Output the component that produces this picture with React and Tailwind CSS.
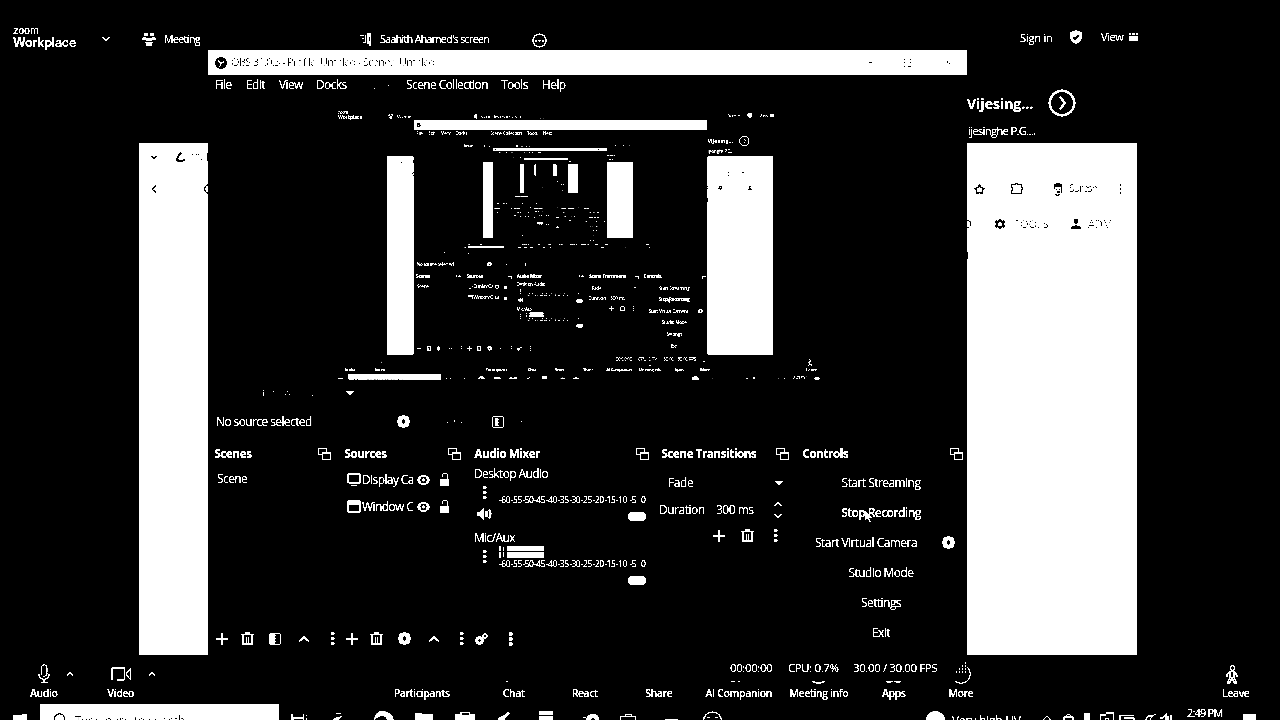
import React from "react";
import {
  ChevronLeft, Star, MessageSquare, Heart, Info, Sparkles, Share, LayoutGrid, Users,
} from "lucide-react";
import { MdPerson, MdSettings } from "react-icons/md";

/* ---------- small drawings ---------- */

const Gear = ({ s = 13 }) => (
  <svg width={s} height={s} viewBox="0 0 14 14" className="shrink-0" fill="none" stroke="currentColor">
    <circle cx="7" cy="7" r="4.100" strokeWidth="3.600" />
    <circle cx="7" cy="7" r="6" strokeWidth="2" pathLength="16" strokeDasharray="1.2 0.8" strokeDashoffset="0.6" />
  </svg>
);

const Plus = () => (
  <svg width="12" height="12" viewBox="0 0 12 12" className="shrink-0" shapeRendering="crispEdges">
    <path d="M5 0h2v12H5zM0 5h12v2H0z" fill="currentColor" />
  </svg>
);

const Trash = () => (
  <svg width="13" height="14" viewBox="0 0 13 14" className="shrink-0" fill="none" stroke="currentColor">
    <path d="M4 1h5" strokeWidth="2" />
    <path d="M0.5 2.5h12" strokeWidth="1.4" />
    <path d="M2 3v9.2h9V3" strokeWidth="2" />
    <path d="M5.5 5v6M7.5 5v6" strokeWidth="1" />
  </svg>
);

const Filter = () => (
  <svg width="12" height="12" viewBox="0 0 12 12" className="shrink-0">
    <rect x="0.5" y="0.5" width="11" height="11" rx="1.5" fill="none" stroke="currentColor" />
    <path d="M1 1h5v1h1v1H6v2h1v1H6v2h1v1H6v2H1z" fill="currentColor" />
  </svg>
);

const HalfBox = () => (
  <svg width="12" height="12" viewBox="0 0 12 12" className="shrink-0">
    <rect x="0.5" y="0.5" width="11" height="11" rx="1.5" fill="none" stroke="currentColor" />
    <path d="M3 2h3v1h1v1H6v2h1v1H6v2h1v1H3z" fill="currentColor" />
  </svg>
);

const Dots = ({ h = 13 }) => (
  <svg width="4" height={h} viewBox="0 0 4 13" className="shrink-0" fill="currentColor">
    <rect x="0" y="0" width="3.4" height="3" rx="0.6" />
    <rect x="0" y="5" width="3.4" height="3" rx="0.6" />
    <rect x="0" y="10" width="3.4" height="3" rx="0.6" />
  </svg>
);

const Up = ({ w = 12, sw = 1.8 }) => (
  <svg width={w} height={w / 2} viewBox="0 0 12 6" className="shrink-0" fill="none" stroke="currentColor" strokeWidth={sw}>
    <path d="M1 5.5 6 1l5 4.5" />
  </svg>
);

const Down = ({ w = 8, sw = 2 }) => (
  <svg width={w} height={w / 2} viewBox="0 0 12 6" className="shrink-0" fill="none" stroke="currentColor" strokeWidth={sw}>
    <path d="M1 0.5 6 5l5-4.5" />
  </svg>
);

const Caret = () => (
  <svg width="8" height="4" viewBox="0 0 8 4" className="shrink-0">
    <path d="M0 0h8L4 4z" fill="currentColor" />
  </svg>
);

const Popout = () => (
  <svg width="14" height="14" viewBox="0 0 14 14" className="shrink-0" fill="currentColor" shapeRendering="crispEdges">
    <path d="M0 1h9v4H8V2H1v5h3v1H0z" />
    <path d="M4 5h9v8H4zM5 7v5h7V7z" fillRule="evenodd" />
  </svg>
);

const Eye = () => (
  <svg width="13" height="10" viewBox="0 0 13 10" className="shrink-0">
    <path d="M0 5C3-1.6 10-1.6 13 5 10 11.6 3 11.6 0 5z" fill="currentColor" />
    <circle cx="6.5" cy="5" r="3.2" fill="#000" />
    <circle cx="6.5" cy="5" r="1.4" fill="currentColor" />
  </svg>
);

const Lock = () => (
  <svg width="10" height="13" viewBox="0 0 10 13" className="shrink-0">
    <path d="M2.5 4V2.5a2 2 0 0 1 5 0V6" fill="none" stroke="currentColor" strokeWidth="0.9" />
    <rect x="0" y="6" width="9" height="7" fill="currentColor" />
  </svg>
);

const Speaker = () => (
  <svg width="15" height="12" viewBox="0 0 15 12" className="shrink-0" fill="currentColor">
    <path d="M0 4h3l4-4v12L3 8H0z" />
    <path d="M9.5 3v6M12 1.5q3 4.500 0 9" fill="none" stroke="currentColor" strokeWidth="1.9" />
  </svg>
);

const Gears = () => (
  <span className="flex w-[15px] shrink-0 items-end">
    <Gear s={9} />
    <span className="-ml-0.5 mb-[6px]"><Gear s={6} /></span>
  </span>
);

const Cursor = () => (
  <svg width="9" height="14" viewBox="0 0 9 14" className="absolute left-[62px] top-[12px]">
    <path d="M1 0v11l2.500-2.200L5.500 13l1.700-.8-1.700-4H9z" fill="#fff" stroke="#000" strokeWidth="0.6" />
  </svg>
);

/* ---------- zoom meeting chrome ---------- */

const ZoomHeader = () => (
  <div className="flex h-[50px] items-start pl-[13px] text-[11px] leading-4 tracking-[-0.2px]">
    <div className="w-[89px] pt-[25px] font-['Inter',sans-serif]">
      <div className="text-[10px] leading-[11px] tracking-[-0.2px] font-medium">zoom</div>
      <div className="text-[12.5px] leading-[14px] tracking-[-0.2px] font-semibold">Workplace</div>
    </div>
    <div className="w-[40px] pt-[37px]"><Down w={8} /></div>
    <div className="w-[22px] pt-[33px]">
      <svg width="14" height="13" viewBox="0 0 14 13" fill="#fff" shapeRendering="crispEdges">
        <path d="M2 0h4v3H2zM8 0h4v3H8zM1 4h3v1h6V4h3v1h1v2h-4v1H4V7H0V5h1zM3 9h8v1h-1v3H4v-3H3z" />
      </svg>
    </div>
    <div className="w-[196px] pt-[31px] text-[10.5px] tracking-[-0.55px] font-medium">Meeting</div>
    <div className="w-[20px] pt-[33px]">
      <svg width="12" height="14" viewBox="0 0 12 14" fill="currentColor" shapeRendering="crispEdges">
        <path d="M0 2h4v1H0zM2 5h2v1H2zM5 2h1v8H3V9h2zM7 0h4v13H9V11H7z" />
        <path d="M9 4h1v4H9z" fill="#000" />
      </svg>
    </div>
    <div className="w-[152px] whitespace-nowrap pt-[31px] text-[10.5px] tracking-[-0.6px] font-medium">Saahith Ahamed&#39;s screen</div>
    <div className="w-[488px] pt-[32.500px]">
      <svg width="15" height="15" viewBox="0 0 15 15"><circle cx="7.500" cy="7.500" r="6.500" fill="none" stroke="#fff" strokeWidth="1.200" /><path d="M3 7h2v1.500H3zM6.500 7h2v1.500h-2zM10 7h2v1.500h-2z" fill="#fff" /></svg>
    </div>
    <div className="w-[49px] pt-[29.500px]">Sign in</div>
    <div className="w-[32px] pt-[30px]">
      <svg width="14" height="14" viewBox="0 0 14 14">
        <path d="M7 0l6 2.500v4.500q0 4.500-6 7-6-2.500-6-7V2.500z" fill="#fff" />
        <path d="M4 7l2.200 2.200L10.200 5" fill="none" stroke="#000" strokeWidth="2" />
      </svg>
    </div>
    <div className="w-[28px] pt-[29px] tracking-[-0.4px]">View</div>
    <svg width="9" height="8" viewBox="0 0 9 8" className="mt-[33px]" fill="#fff" shapeRendering="crispEdges">
      <path d="M0 0h2v2H0zM3 0h3v2H3zM7 0h2v2H7zM0 3h9v5H0z" />
    </svg>
  </div>
);

const Tool = ({ label, icon, caret, className }) => (
  <div className={"flex flex-col items-center " + className}>
    <div className="flex h-[24px] w-full items-center justify-center">
      <div className="relative flex w-full justify-center">
        {icon}
        {caret && <span className={"absolute top-1/2 -translate-x-1/2 -translate-y-1/2 " + caret}><Up w={7} sw={2.2} /></span>}
      </div>
    </div>
    <div className="whitespace-nowrap text-[10.5px] leading-[14px] tracking-[-0.4px] font-semibold">{label}</div>
  </div>
);

const Mic = () => (
  <svg width="12" height="20" viewBox="0 0 12 20" fill="none" stroke="currentColor" strokeWidth="1" className="block">
    <path d="M3.500 11V3.500a2.700 2.700 0 0 1 5.400 0V8M8.800 8v4M1 10v2q1 3.500 5 3.500t5-3.500v-2M6 15.500v3M3 18.500h6.500M5 12.500q3 .5 4-3" />
  </svg>
);

const Video = () => (
  <svg width="20" height="14" viewBox="0 0 20 14" fill="none" stroke="currentColor" strokeWidth="1.1" className="block">
    <path d="M1 13V1h13M13.500 1v10q0 2-2 2H6M15.500 6l4-4v10l-4-4z" />
  </svg>
);

const Walker = () => (
  <svg width="12" height="19" viewBox="0 0 12 19" fill="none" stroke="currentColor" strokeWidth="1.3" className="-ml-[7px] block">
    <circle cx="6.500" cy="3" r="2.300" />
    <path d="M4.500 6.500 1 9.500v3M4.500 6.500h3L11 10v2M4 7v5L1.500 18h2L6 13l2.500 5h2L8 12V7" />
  </svg>
);

const ZoomToolbar = () => (
  <div className="flex h-[42px] pl-[13.750px]">
    <Tool className="w-[60px]" label="Audio" icon={<Mic />} caret="left-[56px]" />
    <Tool className="ml-[17px] w-[60px]" label="Video" icon={<Video />} caret="left-[61px]" />
    <Tool className="ml-[231px] w-[80px]" label="Participants" icon={<Users size={16} />} />
    <Tool className="ml-[22px] w-[60px]" label="Chat" icon={<MessageSquare size={18} />} />
    <Tool className="ml-[11px] w-[60px]" label="React" icon={<Heart size={18} />} />
    <Tool className="ml-[14px] w-[60px]" label="Share" icon={<Share size={16} />} />
    <Tool className="ml-[10px] w-[80px]" label="AI Companion" icon={<Sparkles size={18} />} />
    <Tool className="w-[80px]" label="Meeting info" icon={<Info size={21} />} />
    <Tool className="ml-[5px] w-[60px]" label="Apps" icon={<LayoutGrid size={19} />} />
    <Tool
      className="ml-[7px] w-[60px]"
      label="More"
      icon={<svg width="20" height="20" viewBox="0 0 20 20" className="block"><circle cx="10" cy="10" r="9.300" fill="none" stroke="#fff" strokeWidth="1.1" /></svg>}
    />
    <Tool className="ml-[215px] w-[60px]" label="Leave" icon={<Walker />} />
  </div>
);

/* ---------- taskbar ---------- */

const TaskIcons = () => (
  <svg width="440" height="16" viewBox="285 0 440 16" className="shrink-0" fill="#fff" stroke="none">
    <path d="M291 10h2v3h10v-3h1v6h-1v-1h-9v1h-3zM306 11h1v1h-1zM306 14h1v2h-1z" />
    <path d="M336 9h5v1h-5zM338 13l4-1-1 2-3 2h-5v-1z" />
    <path d="M374 16q1-9 9-9 9 1 11 9h-7q-2-5-6-4-3 1-7 4z" />
    <path d="M415 9h6l1 1h11v6h-18z" />
    <path d="M455 10h5V8h10v2h5v6h-20zM462 9v2h7V9z" fillRule="evenodd" />
    <path d="M508 8l2 1-5 5v2h-7q0-3 5-4z" />
    <path d="M539 7h14v4h-14zM539 12h14v4h-14z" />
    <path d="M583 13h3v1h-3zM586 16q1-6 7-6t6 6h-3l-3-3-2 3z" />
    <path d="M620 12h5v-2h7v2h4v4h-1v-3h-14v3h-1zM626 11v1h5v-1z" fillRule="evenodd" />
    <path d="M665 15h13v1h-13z" />
    <circle cx="712.500" cy="17" r="9" fill="none" stroke="#fff" strokeWidth="1.200" />
    <path d="M707 13h3v1h-3zM715 13h3v1h-3z" />
  </svg>
);

const Taskbar = () => (
  <div className="flex h-[16px] items-start overflow-hidden pl-[13px]">
    <svg width="14" height="6" viewBox="0 0 14 6" className="mt-[10px] shrink-0">
      <path d="M0 1.500 6 1v5H0zM6.300 1 14 0v6H6.300z" fill="#fff" />
    </svg>
    <div className="ml-[13px] flex h-[16px] w-[239px] shrink-0 overflow-hidden bg-white pl-[14px] pt-[9px] text-[#404040]">
      <svg width="11" height="14" viewBox="0 0 11 14" className="shrink-0"><circle cx="5.500" cy="5.500" r="4.800" fill="none" stroke="#000" strokeWidth="1.400" /></svg>
      <div className="ml-[10px] whitespace-nowrap text-[12px] leading-[16px]">Type here to search</div>
    </div>
    <div className="ml-[6px]"><TaskIcons /></div>
    <div className="ml-[201px] mt-[7px] h-[19px] w-[19px] shrink-0 rounded-full bg-white" />
    <div className="ml-[7px] mt-[9px] w-[88px] shrink-0 whitespace-nowrap text-[12px] leading-[16px] tracking-[-0.2px]">Very high UV</div>
    <svg width="132" height="16" viewBox="1040 0 132 16" className="shrink-0" fill="none" stroke="#fff" strokeWidth="1.100">
      <path d="M1043.500 15.500 1047 12l3.500 3.500" />
      <path d="M1064 16v-3h9v3M1066 12q2.500-3 5 0" />
      <path d="M1084 9h6v7h-6z" fill="#fff" stroke="none" />
      <path d="M1100.500 16v-5h5l1-2h7v7M1105 16q2-4 4 0" />
      <path d="M1120 11.500h14M1120 11v5M1124 14h10v2" />
      <path d="M1146 16q1-5 6-4M1150 16q1-4 6-6M1160 14h3l3-4v6M1168 12v4M1171 11v5" />
    </svg>
    <div className="ml-[15px] mt-[1px] w-[56px] shrink-0 whitespace-nowrap text-[11px] leading-[16px] tracking-[-0.8px]">2:49 PM</div>
    <div className="mt-[10px] h-[6px] w-[13px] shrink-0 bg-white" />
  </div>
);

/* ---------- browser window behind ---------- */

const Browser = () => (
  <div className="absolute left-[139px] top-[143px] flex h-[512px] w-[998px] flex-col bg-white text-black">
    <div className="flex h-[28px] items-center pl-[12px]">
      <div className="w-[25px]"><Down w={6} sw={2.4} /></div>
      <svg width="10" height="10" viewBox="0 0 10 10" fill="none" stroke="#000"><path d="M5 1Q1 5 1 8q3 2 8 0" strokeWidth="2.200" /><path d="M4 1h2M6 4h2" strokeWidth="1.200" /></svg>
      <svg width="17" height="8" viewBox="0 0 17 8" className="ml-[6px]" fill="#000" shapeRendering="crispEdges"><path d="M0 1h1v1H0zM4 1h1v1H4zM6 1h1v1H6zM9 6h1v1H9zM15 0h1v8h-1z" /></svg>
    </div>
    <div className="flex h-[36px] items-center pl-[9px]">
      <div className="w-[56px]"><ChevronLeft size={12} strokeWidth={2.8} /></div>
      <svg width="10" height="10" viewBox="0 0 10 10"><circle cx="5" cy="5" r="4.300" fill="none" stroke="#000" strokeWidth="1.500" /></svg>
      <Star size={11} strokeWidth={3} className="ml-[760px]" />
      <svg width="12" height="12" viewBox="0 0 12 12" className="ml-[26px]" fill="none" stroke="#000" strokeWidth="1" shapeRendering="crispEdges">
        <path d="M0.500 1.500h4v-1h2v1h4v3h1v2h-1v4h-10v-3h1v-3h-1z" />
      </svg>
      <svg width="9" height="13" viewBox="0 0 9 13" className="ml-[31px]">
        <path d="M0 1q4-2 8 0v9H7V4H1v2H0z" fill="#000" />
        <path d="M2 6.500h1M5 6.500h1.500M3 9h3M1 11l2 1.500 3-1" stroke="#000" strokeWidth="1.400" fill="none" />
      </svg>
      <div className="ml-[6px] w-[50px] text-[10.5px] tracking-[-0.95px] text-[#262626]">Suresh</div>
      <svg width="3" height="10" viewBox="0 0 3 10" shapeRendering="crispEdges"><path d="M1 0h1v2H1zM1 4h1v2H1zM1 8h1v2H1z" fill="#000" /></svg>
    </div>
    <div className="flex h-[34px] items-center pl-[825px] text-[11px] text-[#3a3a3a]">
      <div className="w-[29px] text-black">D</div>
      <MdSettings size={14} className="shrink-0 text-black" />
      <div className="ml-[7px] w-[59px] tracking-[-0.1px]">TOOLS</div>
      <MdPerson size={16} className="-ml-[5px] text-black" />
      <div className="ml-[4px] w-[27px] overflow-hidden tracking-[-0.2px]">ADM</div>
    </div>
    <div className="ml-[827px] mt-[11px] h-[7px] w-[2px] bg-black" />
  </div>
);

/* ---------- OBS window ---------- */

const Dock = ({ title, children, className, titleWidth }) => (
  <div className={"flex h-full shrink-0 flex-col " + className}>
    <div className="flex h-[20px] shrink-0 items-center">
      <div className={"whitespace-nowrap pl-[0.5px] text-[11.5px] font-bold tracking-[-0.35px] " + titleWidth}>{title}</div>
      <Popout />
    </div>
    {children}
  </div>
);

const SourceRow = ({ icon, name }) => (
  <div className="flex h-[27px] items-center pl-[3px]">
    {icon}
    <div className="w-[52px] overflow-hidden whitespace-nowrap pl-[1px] text-[12px] tracking-[-0.6px]">{name}</div>
    <span className="ml-[4px]"><Eye /></span>
    <span className="ml-[10px]"><Lock /></span>
  </div>
);

const ticks = ["-60", "-55", "-50", "-45", "-40", "-35", "-30", "-25", "-20", "-15", "-10", "-5", "0"];

const Channel = ({ name, meter, speaker }) => (
  <div className="flex h-[64px] flex-col">
    <div className="h-[16px] text-[12px] leading-4 tracking-[-0.6px]">{name}</div>
    <div className="flex">
      <div className="flex w-[25px] flex-col pl-[3px]">
        <div className="flex h-[20px] items-center pl-[6px] pt-[1px]"><Dots /></div>
        <div className="mt-[6px] h-[15px]">{speaker && <Speaker />}</div>
      </div>
      <div className="w-[148px]">
        <div className="flex h-[13px] items-start">
          {meter && (
            <>
              <svg width="7" height="12" viewBox="0 0 7 12" shapeRendering="crispEdges"><path d="M0 0h2v5H0zM0 6h2v6H0zM4 1h1v4H4zM4 6h1v5H4z" fill="#fff" /></svg>
              <div className="ml-px flex flex-col gap-px">
                <div className="h-[5px] w-[37px] bg-white" />
                <div className="h-[6px] w-[37px] bg-white" />
              </div>
            </>
          )}
        </div>
        <div className="flex h-[11px] text-[8.5px] font-medium leading-[9px] tracking-[-0.45px]">
          {ticks.map((t) => <span key={t} className={t === "-5" ? "ml-[2px] w-[11.5px] shrink-0" : "w-[11.7px] shrink-0"}>{t}</span>)}
        </div>
        <div className="ml-[129px] mt-[6px] h-[9px] w-[18px] rounded-full bg-white" />
      </div>
    </div>
  </div>
);

const ControlButton = ({ children, extra, className = "" }) => (
  <div className={"relative flex h-[30px] w-[158px] shrink-0 items-center justify-center whitespace-nowrap text-[12px] tracking-[-0.55px] " + className}>
    {children}
    {extra}
  </div>
);

const TitleBar = () => (
  <div className="flex h-[25px] shrink-0 items-center bg-white pl-[7px] text-black">
    <svg width="12" height="12" viewBox="0 0 12 12" className="shrink-0">
      <circle cx="6" cy="6" r="6" fill="#000" />
      <path d="M3 3q1 3 3 3t3-2M6 6q0 2-1.500 4" fill="none" stroke="#fff" strokeWidth="1.100" />
    </svg>
    <div className="ml-[4px] w-[638px] whitespace-nowrap text-[11px] tracking-[-0.67px] text-[#363636]">OBS 31.0.3 - Profile: Untitled - Scenes: Untitled</div>
    <div className="h-px w-[3px] bg-black" />
    <svg width="8" height="8" viewBox="0 0 8 8" className="ml-[32px]" shapeRendering="crispEdges"><path d="M0 0h1v1H0zM6 0h1v1H6zM0 3h1v1H0zM0 7h1v1H0zM4 7h3v1H4zM6 3h1v1H6z" fill="#000" /></svg>
    <svg width="4" height="4" viewBox="0 0 4 4" className="ml-[35px]" shapeRendering="crispEdges"><path d="M0 0h1v2H0zM2 2h1v1H2z" fill="#000" /></svg>
  </div>
);

const Preview = ({ depth }) => (
  <div className="h-[286px] shrink-0 pl-[124.500px] pt-[6.500px]">
    <div className="h-[279px] w-[496px] overflow-hidden">
      {depth > 0 && (
        <div className="h-[720px] w-[1280px] origin-top-left scale-[0.3873] opacity-90">
          {depth > 1 ? <Desktop depth={depth - 1} /> : <Miniature depth={depth - 1} />}
        </div>
      )}
    </div>
  </div>
);

const Obs = ({ depth }) => (
  <div className="absolute left-[208px] top-[50px] flex h-[631px] w-[759px] flex-col overflow-hidden bg-black">
    <TitleBar />
    <div className="flex h-[19px] shrink-0 items-center whitespace-nowrap pl-[7px] text-[12px] tracking-[-0.6px]">
      <div className="w-[31px]">File</div>
      <div className="w-[33px]">Edit</div>
      <div className="w-[37px]">View</div>
      <div className="w-[57px]">Docks</div>
      <svg width="33" height="8" viewBox="0 0 33 8" className="shrink-0" shapeRendering="crispEdges"><path d="M1 7h1v1H1zM15 4h1v1H15z" fill="#fff" /></svg>
      <div className="w-[95px]">Scene Collection</div>
      <div className="w-[41px]">Tools</div>
      <div>Help</div>
    </div>
    <Preview depth={depth} />
    <div className="flex h-[26px] shrink-0 items-center pl-[55px]">
      <svg width="83" height="6" viewBox="0 0 83 6" shapeRendering="crispEdges"><path d="M0 0h1v1H0zM0 2h1v4H0zM10 1h1v1H10zM24 1h1v1H24zM22 4h1v1H22zM26 4h1v1H26zM49 5h1v1H49z" fill="#fff" /></svg>
      <Caret />
    </div>
    <div className="flex h-[31px] shrink-0 items-center pl-[8px]">
      <div className="w-[180.500px] text-[12px] tracking-[-0.6px]">No source selected</div>
      <Gear s={13} />
      <svg width="82.500" height="6" viewBox="0 0 82.500 6" shapeRendering="crispEdges"><path d="M37 3h1v1H37zM44 1h1v2H44zM51 3h1v1H51z" fill="#fff" /></svg>
      <HalfBox />
      <div className="ml-[17px] h-px w-px bg-white" />
    </div>
    <div className="mt-[7px] flex h-[181px] shrink-0 pl-[6px]">
      <Dock title="Scenes" titleWidth="w-[104px]" className="w-[130px]">
        <div className="pl-[3px] pt-[6px] text-[12px] leading-[18px] tracking-[-0.6px]">Scene</div>
      </Dock>
      <Dock title="Sources" titleWidth="w-[104px]" className="w-[130px]">
        <div className="pt-[2px]">
          <SourceRow
            name="Display Capture"
            icon={<svg width="14" height="13" viewBox="0 0 14 13" className="shrink-0"><rect x="0.800" y="0.800" width="12.400" height="9.400" rx="2" fill="none" stroke="#fff" strokeWidth="1.400" /><path d="M4 12.500h6" stroke="#fff" /></svg>}
          />
          <SourceRow
            name="Window Capture"
            icon={<svg width="14" height="13" viewBox="0 0 14 13" className="shrink-0"><rect x="0.800" y="0.800" width="12.400" height="11.400" rx="2" fill="none" stroke="#fff" strokeWidth="1.500" /><path d="M1 1h12v4H1z" fill="#fff" /></svg>}
          />
        </div>
      </Dock>
      <Dock title="Audio Mixer" titleWidth="w-[162px]" className="w-[187px]">
        <div className="pt-[2px]">
          <Channel name="Desktop Audio" speaker />
          <Channel name="Mic/Aux" meter />
        </div>
      </Dock>
      <Dock title="Scene Transitions" titleWidth="w-[115px]" className="w-[141px]">
        <div className="flex h-[37px] items-center pl-[7px] text-[12px] tracking-[-0.4px]">
          <div className="w-[106.500px]">Fade</div>
          <Caret />
        </div>
        <div className="-ml-[2px] flex h-[18px] items-center whitespace-nowrap text-[12px] tracking-[-0.5px]">
          <div className="w-[57px]">Duration</div>
          <div className="w-[58px]">300 ms</div>
          <div className="flex flex-col gap-[8px]"><Up w={8} sw={1.8} /><Down w={8} sw={1.8} /></div>
        </div>
        <div className="flex h-[33px] items-center pl-[52px]">
          <Plus />
          <span className="ml-[16px]"><Trash /></span>
          <span className="ml-[20px]"><Dots /></span>
        </div>
      </Dock>
      <Dock title="Controls" titleWidth="w-[148px]" className="w-[165px]">
        <div className="-mb-[20px] flex flex-col pt-[4px]">
          <ControlButton>Start Streaming</ControlButton>
          <ControlButton className="font-semibold tracking-[-0.8px]" extra={<Cursor />}>Stop Recording</ControlButton>
          <ControlButton extra={<span className="absolute left-[140px] top-[8px]"><Gear s={13} /></span>}>
            <span className="pr-[30px]">Start Virtual Camera</span>
          </ControlButton>
          <ControlButton>Studio Mode</ControlButton>
          <ControlButton>Settings</ControlButton>
          <ControlButton>Exit</ControlButton>
        </div>
      </Dock>
    </div>
    <div className="flex h-[27px] shrink-0 items-center pl-[8px]">
      <div className="flex w-[130px] items-center">
        <Plus /><span className="ml-[13px]"><Trash /></span><span className="ml-[15px]"><Filter /></span>
        <span className="ml-[17px]"><Up /></span><span className="ml-[21px]"><Dots /></span>
      </div>
      <div className="flex w-[129px] items-center">
        <Plus /><span className="ml-[12px]"><Trash /></span><span className="ml-[15px]"><Gear s={13} /></span>
        <span className="ml-[17px]"><Up /></span><span className="ml-[20px]"><Dots /></span>
      </div>
      <Gears /><span className="ml-[19px]"><Dots h={14} /></span>
    </div>
    <div className="flex flex-1 items-start pl-[522px] pt-[8px] text-[11.5px] leading-4 tracking-[-0.4px]">
      <div className="w-[58px]">00:00:00</div>
      <div className="w-[65px]">CPU: 0.7%</div>
      <div className="w-[103px] whitespace-nowrap">30.00 / 30.00 FPS</div>
      <svg width="11" height="11" viewBox="0 0 11 11" className="mt-[2px] shrink-0" shapeRendering="crispEdges">
        <path d="M9 0h1v2H9zM6 3h1v2H6zM9 3h1v2H9zM3 6h1v2H3zM6 6h1v2H6zM9 6h1v2H9zM0 9h1v2H0zM3 9h1v2H3zM6 9h1v2H6zM9 9h1v2H9z" fill="#fff" />
      </svg>
    </div>
  </div>
);

/* Text-free desktop for the innermost level of the preview. */
const Miniature = ({ depth }) => (
  <div className="relative h-[720px] w-[1280px] overflow-hidden bg-black">
    <div className="absolute left-[139px] top-[143px] h-[512px] w-[998px] bg-white" />
    <div className="absolute left-[208px] top-[50px] flex h-[631px] w-[759px] flex-col bg-black">
      <div className="h-[25px] shrink-0 bg-white" />
      <div className="h-[19px] shrink-0" />
      <Preview depth={depth} />
    </div>
  </div>
);

function Desktop({ depth }) {
  return (
    <div className="relative flex h-[720px] w-[1280px] flex-col overflow-hidden bg-black font-['Open_Sans','Noto_Sans',sans-serif] text-white">
      <ZoomHeader />
      <div className="h-[612px] pl-[967px] pt-[39px]">
        <div className="flex items-center">
          <div className="w-[81px] whitespace-nowrap text-[14px] font-bold leading-[27px] tracking-[0px]">Vijesing...</div>
          <svg width="28" height="28" viewBox="0 0 28 28"><circle cx="14" cy="14" r="12.300" fill="none" stroke="#fff" strokeWidth="2.400" /><path d="M12 8l5 6-5 6" fill="none" stroke="#fff" strokeWidth="2" /></svg>
        </div>
        <div className="mt-[6px] whitespace-nowrap pl-[1px] text-[11.5px] leading-[16px] tracking-[-0.8px]">ijesinghe P.G....</div>
      </div>
      <ZoomToolbar />
      <Taskbar />
      <Browser />
      <Obs depth={depth} />
    </div>
  );
}

export default function App() {
  return (
    <main className="h-[720px] w-[1280px] overflow-hidden bg-black grayscale brightness-[1.3] contrast-[40]">
      <Desktop depth={4} />
    </main>
  );
}
